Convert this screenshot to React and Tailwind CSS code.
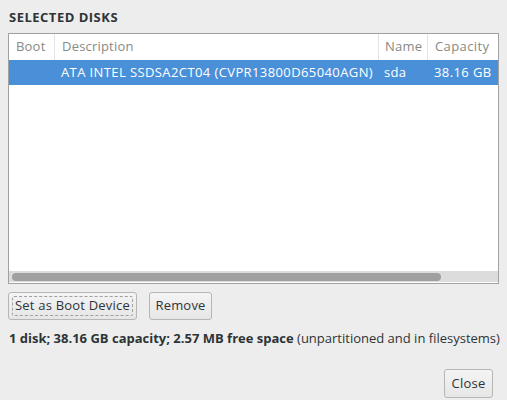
export default function App() {
  const font = { fontFamily: '"Open Sans", "Noto Sans", sans-serif' };
  return (
    <div className="w-[507px] h-[400px] bg-[#ededed] text-[#2e3436] flex flex-col" style={font}>
      <div className="pl-[9px] pt-[8px] h-[33px] text-[13px] font-bold leading-[18px] tracking-[0.5px]">SELECTED DISKS</div>
      <div className="ml-[8px] w-[491px] h-[251px] border border-[#a1a1a1] bg-white flex flex-col">
        <div className="flex h-[26px] text-[13px] text-[#888a85] bg-white tracking-[0.2px]">
          <div className="w-[46px] pl-[7px] flex items-center border-r border-[#e4e4e4]">Boot</div>
          <div className="w-[324px] pl-[7px] flex items-center border-r border-[#e4e4e4]">Description</div>
          <div className="w-[49px] pl-[6px] flex items-center border-r border-[#e4e4e4]">Name</div>
          <div className="flex-1 pl-[7px] flex items-center tracking-[0.4px]">Capacity</div>
        </div>
        <div className="flex h-[25px] text-[13px] text-white bg-[#4a90d9] items-center">
          <div className="w-[46px]"></div>
          <div className="w-[324px] pl-[6px] whitespace-nowrap tracking-[0.4px]">ATA INTEL SSDSA2CT04 (CVPR13800D65040AGN)</div>
          <div className="w-[49px] pl-[5px] tracking-[0.3px]">sda</div>
          <div className="flex-1 pl-[6px] whitespace-nowrap tracking-[0.4px]">38.16 GB</div>
        </div>
        <div className="flex-1"></div>
        <div className="h-[11px] bg-[#dcdcdc] flex items-center px-[3px] mb-[1px]">
          <div className="h-[8px] w-[429px] rounded-full bg-[#9f9f9f]"></div>
        </div>
      </div>
      <div className="flex gap-[12px] ml-[8px] mt-[8px]">
        <button className="h-[28px] w-[129px] rounded-[3px] border border-[#b6b6b3] bg-gradient-to-b from-[#f4f4f4] to-[#e6e6e6] text-[13px] flex items-center justify-center p-[3px]">
          <span className="w-full h-full border border-dashed border-[#a0a0a0] rounded-[2px] flex items-center justify-center tracking-[0.2px]">Set as Boot Device</span>
        </button>
        <button className="h-[28px] w-[63px] rounded-[3px] border border-[#b6b6b3] bg-gradient-to-b from-[#f4f4f4] to-[#e6e6e6] text-[13px] tracking-[0.2px]">Remove</button>
      </div>
      <div className="ml-[9px] mt-[9px] text-[13px] leading-[18px] whitespace-nowrap">
        <span className="font-bold">1 disk; 38.16 GB capacity; 2.57 MB free space</span> (unpartitioned and in filesystems)
      </div>
      <div className="flex justify-end mr-[14px] mt-[22px]">
        <button className="h-[29px] w-[49px] rounded-[3px] border border-[#b6b6b3] bg-gradient-to-b from-[#f4f4f4] to-[#e6e6e6] text-[13px] tracking-[0.2px]">Close</button>
      </div>
    </div>
  );
}
